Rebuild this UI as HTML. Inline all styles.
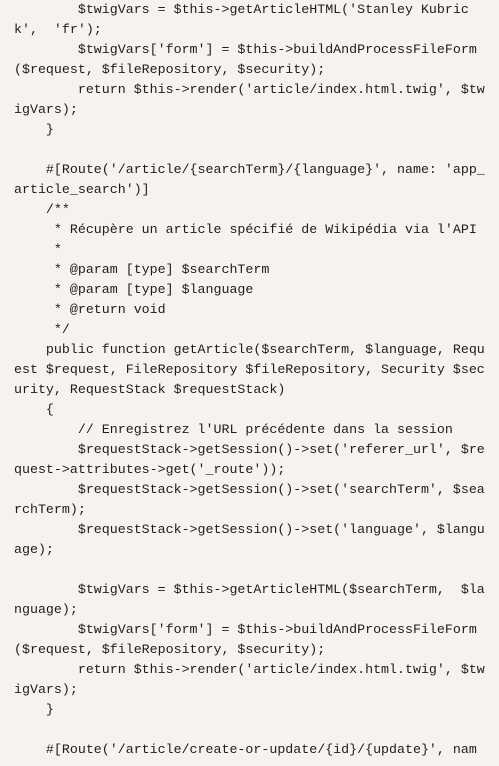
<!DOCTYPE html>
<html><head><meta charset="utf-8"><style>
html,body{margin:0;padding:0;background:#f5f2f0;width:499px;height:766px;overflow:hidden}
pre{margin:0;padding:0 0 0 14px;font-family:"Liberation Mono",monospace;font-size:13.3px;line-height:20px;color:#1d1d1d;white-space:pre}
</style></head><body><pre>        $twigVars = $this->getArticleHTML('Stanley Kubric
k',  'fr');
        $twigVars['form'] = $this->buildAndProcessFileForm
($request, $fileRepository, $security);
        return $this->render('article/index.html.twig', $tw
igVars);
    }

    #[Route('/article/{searchTerm}/{language}', name: 'app_
article_search')]
    /**
     * Récupère un article spécifié de Wikipédia via l'API
     *
     * @param [type] $searchTerm
     * @param [type] $language
     * @return void
     */
    public function getArticle($searchTerm, $language, Requ
est $request, FileRepository $fileRepository, Security $sec
urity, RequestStack $requestStack)
    {
        // Enregistrez l'URL précédente dans la session
        $requestStack->getSession()->set('referer_url', $re
quest->attributes->get('_route'));
        $requestStack->getSession()->set('searchTerm', $sea
rchTerm);
        $requestStack->getSession()->set('language', $langu
age);

        $twigVars = $this->getArticleHTML($searchTerm,  $la
nguage);
        $twigVars['form'] = $this->buildAndProcessFileForm
($request, $fileRepository, $security);
        return $this->render('article/index.html.twig', $tw
igVars);
    }

    #[Route('/article/create-or-update/{id}/{update}', nam
</pre></body></html>
